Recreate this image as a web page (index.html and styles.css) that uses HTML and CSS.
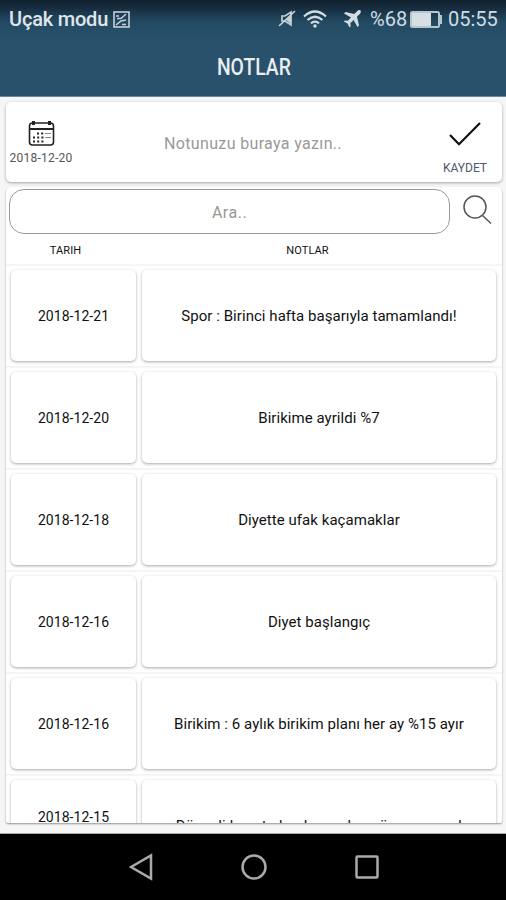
FILE: index.html
```
<!DOCTYPE html>
<html lang="tr">
<head>
    <meta charset="UTF-8">
    <title>Notlar</title>

    <link rel="stylesheet" href="styles.css">
</head>
<body>

<div class="wrapper">
    <header class="header">
        <div class="status">
            <span class="status__text">Uçak modu</span>
            <svg class="status__sim" width="17" height="17" viewBox="0 0 17 17" fill="none" stroke="#c5d0d8" stroke-width="1.6">
                <rect x="1" y="1" width="15" height="15"/>
                <path d="M3 5h3M4 7.500h4l5-4.500M3 14l5-4 5-1M9 13.500h4"/>
            </svg>
            <svg class="status__mute" width="18" height="20" viewBox="0 0 18 20" fill="none" stroke="#c5d0d8" stroke-width="1.7">
                <path d="M4 7h3l6-4v13l-6-4H4z"/>
                <path d="M1 17L17 2"/>
                <path d="M8 11l5-5v9z" fill="#c5d0d8" stroke="none"/>
            </svg>
            <svg class="status__wifi" width="24" height="18" viewBox="0 0 24 18" fill="none" stroke="#d3dce3" stroke-width="2.2">
                <path d="M1 6.500Q12-3.500 23 6.500M4.500 10Q12 3.500 19.500 10M8 13.300Q12 10 16 13.300"/>
                <circle cx="12" cy="16" r="1" fill="#d3dce3" stroke-width="1.500"/>
            </svg>
            <svg class="status__plane" width="18" height="18" viewBox="0 0 18 18" fill="#d3dce3">
                <path d="M17.500.5c-1-.9-2.400-.3-3.400.7L11.200 4 2.500 2 1 3.500l7 4-3.200 3.300-2.800-.4L.8 11.600l3.700 2 2 3.800 1.200-1.200-.4-2.900 3.300-3.200 3.900 7 1.500-1.500-2-8.800 2.800-2.800c1-1 1.500-2.600.7-3.500z"/>
            </svg>
            <span class="status__charge">%68</span>
            <svg class="status__battery" width="33" height="17" viewBox="0 0 33 17">
                <rect x="1" y="1" width="28" height="15" rx="1.500" fill="none" stroke="#b9c5cd" stroke-width="2"/>
                <rect x="2" y="2" width="19" height="13" fill="#d8dfe4"/>
                <rect x="30" y="4" width="2" height="9" fill="#b9c5cd"/>
            </svg>
            <span class="status__time">05:55</span>
        </div>
        <h1 class="header__title">NOTLAR</h1>
    </header>

    <main class="content">
        <form action="#" class="note">
            <div class="note__date">
                <svg width="27" height="27" viewBox="0 0 27 27" fill="none" stroke="#222">
                    <rect x="1.500" y="3" width="24" height="22" rx="3" stroke-width="1.600"/>
                    <path d="M1.500 9h24" stroke-width="2"/>
                    <path d="M5.500 1v4M21.500 1v4" stroke-width="3"/>
                    <path d="M9 13.500h7M5 17.500h11M5 21.500h11" stroke-width="2" stroke-dasharray="2 2.200"/>
                    <path d="M17 13.500h6M17 17.500h6" stroke="#888"/>
                </svg>
                <span>2018-12-20</span>
            </div>
            <div class="note__input">Notunuzu buraya yazın..</div>
            <div class="note__save">
                <svg width="32" height="24" viewBox="0 0 32 24" fill="none" stroke="#111" stroke-width="2.200">
                    <path d="M1 13l9 9.300L31 1"/>
                </svg>
                <span>KAYDET</span>
            </div>
        </form>

        <section class="list">
            <div class="search">
                <div class="search__input">Ara..</div>
                <svg class="search__icon" width="29" height="30" viewBox="0 0 29 30" fill="none" stroke="#555" stroke-width="1.500">
                    <circle cx="12" cy="12" r="11"/>
                    <path d="M19.500 20.500l8.500 8"/>
                </svg>
            </div>
            <div class="list__head">
                <span>TARIH</span>
                <span>NOTLAR</span>
            </div>
            <div class="row">
                <div class="card">2018-12-21</div>
                <div class="card">Spor : Birinci hafta başarıyla tamamlandı!</div>
            </div>
            <div class="row">
                <div class="card">2018-12-20</div>
                <div class="card">Birikime ayrildi %7</div>
            </div>
            <div class="row">
                <div class="card">2018-12-18</div>
                <div class="card">Diyette ufak kaçamaklar</div>
            </div>
            <div class="row">
                <div class="card">2018-12-16</div>
                <div class="card">Diyet başlangıç</div>
            </div>
            <div class="row">
                <div class="card">2018-12-16</div>
                <div class="card">Birikim : 6 aylık birikim planı her ay %15 ayır</div>
            </div>
            <div class="row row--last">
                <div class="card">2018-12-15</div>
                <div class="card">Düzenli hayata başlayacak en ücra yaşam!</div>
            </div>
        </section>
    </main>

    <nav class="nav">
        <svg width="24" height="28" viewBox="0 0 24 28"><path d="M2 14L22 2.500v23z"/></svg>
        <svg width="28" height="28" viewBox="0 0 28 28"><circle cx="14" cy="14" r="11.500"/></svg>
        <svg width="24" height="28" viewBox="0 0 24 28"><rect x="1.500" y="3.500" width="21" height="21" rx="1"/></svg>
    </nav>
</div>

</body>
</html>
```
FILE: styles.css
```
*{
    box-sizing: border-box;
}
body{
    margin: 0;
    font-family: Roboto, sans-serif;
    color: #111;
}
.wrapper{
    display: flex;
    flex-direction: column;
    height: 900px;
    overflow: hidden;
    background-color: #f6f6f6;
}
.header{
    height: 97px;
    flex-shrink: 0;
    background: linear-gradient(#10202c 0, #15293a 6px, #234a62 22px, #29516b 40px, #29516b 100%);
    border-bottom: 1px solid #6d879a;
}
.status{
    display: flex;
    align-items: center;
    height: 38px;
    padding: 0 7px 0 9px;
    font-size: 20px;
    color: #d3dce3;
    white-space: nowrap;
}
.status svg{
    flex-shrink: 0;
}
.status__text{
    width: 104px;
    font-weight: 500;
    letter-spacing: -.2px;
    color: #e0e6ea;
}
.status__mute{
    margin-left: 148px;
}
.status__wifi{
    margin-left: 7px;
}
.status__plane{
    margin-left: 16px;
}
.status__charge{
    width: 40px;
    margin-left: 9px;
}
.status__battery{
    margin-right: 5px;
}
.header__title{
    margin: 15px 0 0;
    padding-left: 2px;
    font-size: 23px;
    line-height: 30px;
    font-weight: 500;
    color: #e9eef1;
    text-align: center;
    transform: scaleX(.84);
}
.content{
    height: 737px;
    flex-shrink: 0;
    padding: 5px 4px 10px 6px;
    border-bottom: 1px solid #aaa;
}
.note{
    display: flex;
    height: 80px;
    margin-bottom: 5px;
    background-color: #fff;
    border-radius: 5px;
    box-shadow: 0 1px 3px rgba(0,0,0,.35);
}
.note__date,
.note__save{
    display: flex;
    flex-direction: column;
    align-items: center;
    width: 70px;
    font-size: 12px;
    line-height: 14px;
    color: #555;
}
.note__date{
    padding-top: 18px;
    letter-spacing: .25px;
}
.note__date span{
    margin-top: 4px;
}
.note__input{
    flex: 1;
    padding: 32px 0 0 2px;
    font-size: 16px;
    line-height: 20px;
    letter-spacing: .35px;
    color: #999;
    text-align: center;
}
.note__save{
    width: 74px;
    padding-top: 20px;
    color: #4b5870;
}
.note__save span{
    margin-top: 15px;
}
.list{
    height: 636px;
    overflow: hidden;
    background-color: #fff;
    border-radius: 5px 5px 2px 2px;
    box-shadow: 0 1px 2px rgba(0,0,0,.4);
}
.search{
    display: flex;
    padding: 2px 3px 0;
}
.search__input{
    width: 441px;
    height: 45px;
    border: 1px solid #999;
    border-radius: 15px;
    font-size: 16px;
    line-height: 46px;
    letter-spacing: .5px;
    color: #999;
    text-align: center;
}
.search__icon{
    margin: 6px 0 0 13px;
}
.list__head{
    display: grid;
    grid-template-columns: 119px 365px;
    height: 30px;
    font-size: 11px;
    line-height: 34px;
    letter-spacing: .1px;
    text-align: center;
}
.row{
    display: flex;
    gap: 6px;
    height: 102px;
    padding: 4px 6px 5px 5px;
    border-top: 2px solid #f5f5f5;
}
.card{
    display: flex;
    align-items: center;
    justify-content: center;
    flex: 1;
    background-color: #fff;
    border-radius: 5px;
    box-shadow: 0 1px 3px rgba(0,0,0,.35);
    font-size: 15px;
    letter-spacing: .05px;
    white-space: nowrap;
}
.card:first-child{
    flex: 0 0 125px;
    font-size: 14px;
}
/* the last row is cut off by the list */
.row--last .card{
    align-items: flex-start;
    padding-top: 37px;
    letter-spacing: .15px;
}
.row--last .card:first-child{
    padding-top: 29px;
    letter-spacing: .05px;
}
.nav{
    display: flex;
    flex: 1;
    align-items: center;
    justify-content: center;
    gap: 87px;
    padding-left: 2px;
    background-color: #000;
}
.nav svg{
    fill: none;
    stroke: #aaa;
    stroke-width: 2.5;
}
```
